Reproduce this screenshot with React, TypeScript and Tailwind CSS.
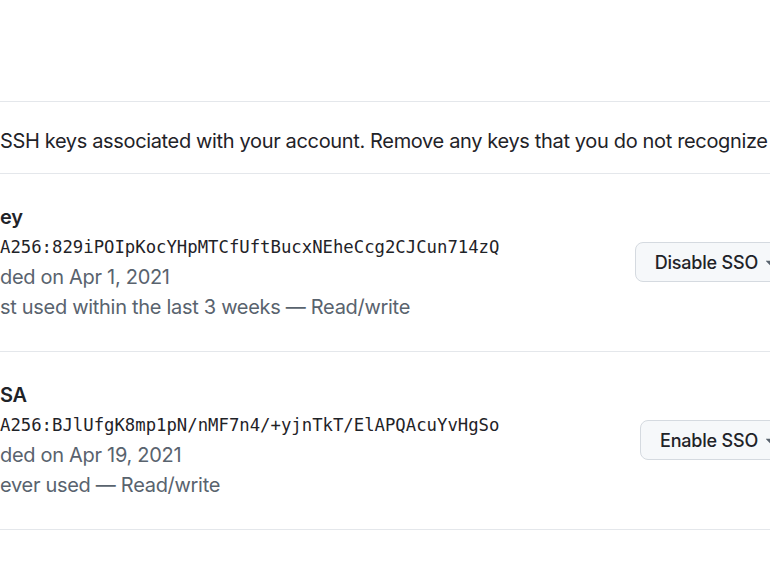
import React from 'react'

interface SshKey {
    title: string
    fingerprint: string
    added: string
    usage: string
    action: string
}

const keys: SshKey[] = [
    {
        title: 'ey',
        fingerprint: 'A256:829iPOIpKocYHpMTCfUftBucxNEheCcg2CJCun714zQ',
        added: 'ded on Apr 1, 2021',
        usage: 'st used within the last 3 weeks — Read/write',
        action: 'Disable SSO',
    },
    {
        title: 'SA',
        fingerprint: 'A256:BJlUfgK8mp1pN/nMF7n4/+yjnTkT/ElAPQAcuYvHgSo',
        added: 'ded on Apr 19, 2021',
        usage: 'ever used — Read/write',
        action: 'Enable SSO',
    },
]

function Caret() {
    return (
        <svg viewBox="0 0 16 16" className="w-[22px] h-[22px] fill-[#59636e]">
            <path d="m4.427 7.427 3.396 3.396a.25.25 0 0 0 .354 0l3.396-3.396A.25.25 0 0 0 11.396 7H4.604a.25.25 0 0 0-.177.427Z" />
        </svg>
    )
}

export default function App() {
    return (
        <div className='w-[770px] h-[578px] overflow-hidden bg-white font-["Inter","Liberation_Sans",sans-serif] text-[#1f2328]'>
            <div className='w-[797px] pt-[101px]'>
                <div className='border-y border-[#e4e7eb] pt-[24px] pb-[17px] text-[20px] leading-[30px] tracking-[-0.35px] whitespace-nowrap'>
                    SSH keys associated with your account. Remove any keys that you do not recognize
                </div>

                {keys.map((key, index) => (
                    <div key={index} className='flex items-center justify-between border-b border-[#e4e7eb] pt-[28px] pb-[29px]'>
                        <div className='text-[20px] leading-[30px] tracking-[-0.3px] whitespace-nowrap'>
                            <div className='font-semibold'>{key.title}</div>
                            <div className='font-["DejaVu_Sans_Mono",monospace] text-[17.3px] tracking-normal'>{key.fingerprint}</div>
                            <div className='text-[#59636e]'>{key.added}</div>
                            <div className='text-[#59636e]'>{key.usage}</div>
                        </div>
                        <button className='flex items-center gap-[2px] h-[40px] pl-[19px] pr-[14px] rounded-[8px] border border-[#d5dae0] bg-[#f6f8fa] text-[18px] tracking-[-0.2px] font-medium'>
                            {key.action}
                            <Caret />
                        </button>
                    </div>
                ))}
            </div>
        </div>
    )
}
